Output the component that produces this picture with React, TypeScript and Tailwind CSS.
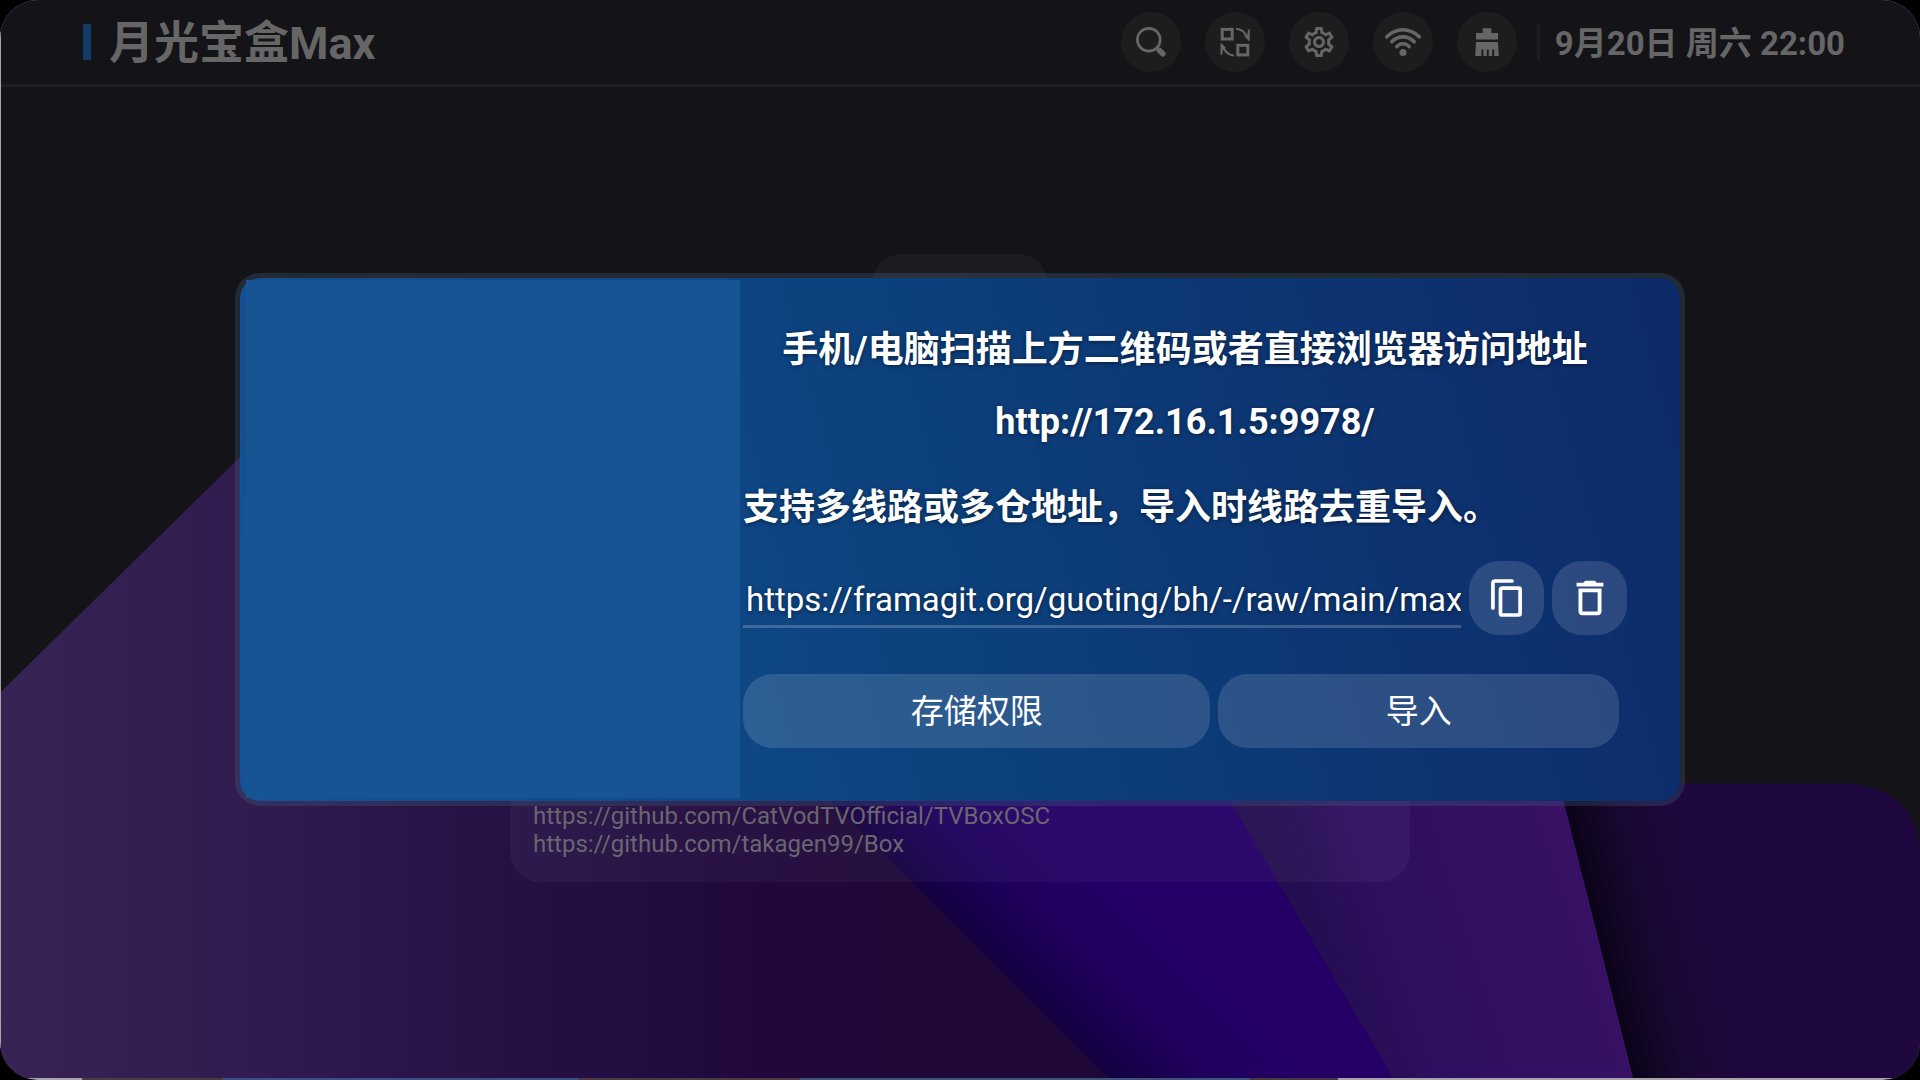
import { useState } from "react";
import type { ReactNode } from "react";
import { MdDeleteOutline, MdOutlineSettings } from "react-icons/md";

const FONT = "font-[Roboto,'Noto_Sans_CJK_SC',sans-serif]";

const SOURCES = [
  "https://github.com/CatVodTVOfficial/TVBoxOSC",
  "https://github.com/takagen99/Box",
];

function SearchIcon() {
  return (
    <svg viewBox="0 0 36 36" className="size-9" fill="none" stroke="currentColor" strokeLinecap="round">
      <circle cx="15.8" cy="15.7" r="11.4" strokeWidth="2.7" />
      <path d="M24 24l2 2" strokeWidth="3" />
      <path d="M26.4 26.4l3.4 3.4" strokeWidth="5.6" />
    </svg>
  );
}

function SwitchIcon() {
  return (
    <svg viewBox="0 0 36 36" className="size-9" fill="none" stroke="currentColor">
      <rect x="5.2" y="5.4" width="10" height="9.6" strokeWidth="3" />
      <rect x="20.8" y="21.3" width="10" height="9.6" strokeWidth="3" />
      <path d="M19 4.8C24 5 28 8 30.5 14" strokeWidth="2" />
      <path d="M17 31.4C12 31.2 8 28 5.5 22" strokeWidth="2" />
      <path d="M32.4 5.8L31.6 16.6 26.6 11.6 30 12.4 31 7z" fill="currentColor" stroke="none" />
      <path d="M31.8 5.5V16.8" strokeWidth="1.8" />
      <path d="M3.8 30.4L4.6 19.6 9.6 24.6 6.2 23.8 5.2 29z" fill="currentColor" stroke="none" />
      <path d="M4.4 30.7V19.4" strokeWidth="1.8" />
    </svg>
  );
}

function WifiIcon() {
  return (
    <svg viewBox="0 0 36 36" className="size-9" fill="none" stroke="currentColor" strokeWidth="3.6" strokeLinecap="round">
      <path d="M1.8 12.8C11 3.4 25 3.4 34.2 12.8" />
      <path d="M6.8 17.8C13 11.2 23 11.2 29.2 17.8" />
      <path d="M11.8 22.6C15.2 18.8 20.8 18.8 24.2 22.6" />
      <circle cx="18" cy="28.4" r="3.5" fill="currentColor" stroke="none" />
    </svg>
  );
}

function CleanIcon() {
  return (
    <svg viewBox="0 0 36 36" className="size-9" fill="currentColor">
      <path d="M13.7 4.3h8.6V9H29v6.5H7V9h6.7z" />
      <path d="M7 18h22l.8 14h-4.6v-6.5h-2V32h-3.4v-6.5h-2V32h-3.4v-6.5h-2V32H6.2z" />
    </svg>
  );
}

function CopyIcon() {
  return (
    <svg viewBox="0 0 31 38" className="h-[38px] w-[31px]" fill="none" stroke="currentColor" strokeWidth="3.7">
      <path d="M1.9 29V4.4q0-2.4 2.4-2.4H21" strokeLinecap="round" />
      <rect x="9.5" y="9.2" width="19.6" height="26.8" rx="1.4" />
    </svg>
  );
}

function Backdrop() {
  return (
    <svg
      viewBox="0 0 1920 1080"
      preserveAspectRatio="none"
      className="absolute inset-0 size-full"
      aria-hidden="true"
    >
      <defs>
        <linearGradient id="plum" gradientUnits="userSpaceOnUse" x1="0" y1="0" x2="900" y2="0">
          <stop offset="0" stopColor="#372354" />
          <stop offset="0.3" stopColor="#2f1b4f" />
          <stop offset="0.6" stopColor="#251044" />
          <stop offset="0.85" stopColor="#20083c" />
          <stop offset="1" stopColor="#1f0838" />
        </linearGradient>
        <linearGradient id="indigo" gradientUnits="userSpaceOnUse" x1="970" y1="940" x2="1070" y2="840">
          <stop offset="0" stopColor="#140040" />
          <stop offset="0.45" stopColor="#1e005c" />
          <stop offset="1" stopColor="#240066" />
        </linearGradient>
        <linearGradient id="violet" gradientUnits="userSpaceOnUse" x1="1310" y1="940" x2="1560" y2="860">
          <stop offset="0" stopColor="#240d50" />
          <stop offset="0.3" stopColor="#2e0f60" />
          <stop offset="1" stopColor="#361164" />
        </linearGradient>
        <linearGradient id="night" gradientUnits="userSpaceOnUse" x1="1598" y1="940" x2="1720" y2="910">
          <stop offset="0" stopColor="#0b0318" />
          <stop offset="0.45" stopColor="#1a0834" />
          <stop offset="1" stopColor="#1f0840" />
        </linearGradient>
      </defs>
      <path d="M1400 785H1848Q1920 791 1920 861V1080H1400z" fill="url(#night)" />
      <path d="M1100 600H1513L1633 1080H1300z" fill="url(#violet)" />
      <path d="M700 600H1112L1393 1080H900z" fill="url(#indigo)" />
      <path d="M0 694L240 458H486L1108 1080H0z" fill="url(#plum)" />
    </svg>
  );
}

function HeaderButton({ label, children }: { label: string; children: ReactNode }) {
  return (
    <button
      aria-label={label}
      className="flex size-[60px] items-center justify-center rounded-full bg-[#1d1d1e]"
    >
      {children}
    </button>
  );
}

function Header() {
  return (
    <header className="relative flex h-[87px] items-center justify-between border-b-3 border-[#1d1d22] pr-[75px] pl-[83px] text-[#666666]">
      <div className="flex items-center gap-[18px]">
        <span className="h-9 w-2 bg-[#113c68]" />
        <h1 className="pt-1 text-[45px] leading-[60px] font-bold">月光宝盒Max</h1>
      </div>
      <div className="flex items-center">
        <nav className="flex gap-6">
          <HeaderButton label="搜索">
            <SearchIcon />
          </HeaderButton>
          <HeaderButton label="切换">
            <SwitchIcon />
          </HeaderButton>
          <HeaderButton label="设置">
            <MdOutlineSettings className="size-9" />
          </HeaderButton>
          <HeaderButton label="网络">
            <WifiIcon />
          </HeaderButton>
          <HeaderButton label="清理">
            <CleanIcon />
          </HeaderButton>
        </nav>
        <span className="mr-[15px] ml-5 h-9 w-[3px] bg-[#1d1d1f]" />
        <time className="pt-1 text-[33px] leading-[60px] font-bold">9月20日 周六 22:00</time>
      </div>
    </header>
  );
}

function ImportDialog() {
  const [url, setUrl] = useState("https://framagit.org/guoting/bh/-/raw/main/max.json");

  return (
    <div
      role="dialog"
      aria-modal="true"
      aria-labelledby="import-title"
      className="box-content flex w-3/4 rounded-[25px] border-5 border-[#47607c]/30 bg-linear-75 from-[#145496] via-[#0c407c] via-50% to-[#0d2a68] bg-clip-padding text-white"
    >
      {/* QR code slot */}
      <div className="mt-0.5 mb-[3px] ml-1.5 h-[518px] w-[494px] shrink-0 bg-[#165494]" />

      <div className="flex min-w-0 flex-1 flex-col pt-12 pr-[53px] pl-[3px]">
        <div className="text-center text-4xl leading-[48px] font-bold text-shadow-[0_1px_4px_rgb(0_0_0/0.5)]">
          <h2 id="import-title">手机/电脑扫描上方二维码或者直接浏览器访问地址</h2>
          <p className="mt-6">http://172.16.1.5:9978/</p>
          <p className="mt-[38px] text-left">支持多线路或多仓地址，导入时线路去重导入。</p>
        </div>

        <div className="mt-[29px] flex gap-2">
          <input
            type="text"
            aria-label="线路地址"
            value={url}
            onChange={(e) => setUrl(e.target.value)}
            className="mt-[7px] h-[60px] min-w-0 flex-1 border-b-3 border-white/20 bg-transparent pt-1.5 pl-[3px] text-[33px] outline-none text-shadow-[0_1px_4px_rgb(0_0_0/0.5)]"
          />
          <button
            aria-label="复制"
            className="flex h-[74px] w-[75px] items-center justify-center rounded-[30px] bg-white/13"
          >
            <CopyIcon />
          </button>
          <button
            aria-label="删除"
            onClick={() => setUrl("")}
            className="flex h-[74px] w-[75px] items-center justify-center rounded-[30px] bg-white/13"
          >
            <MdDeleteOutline className="size-[46px]" />
          </button>
        </div>

        <div className="mt-[39px] flex gap-2 pr-2 text-[33px]">
          <button className="h-[74px] flex-[7] rounded-[30px] bg-white/13 pt-0.5">存储权限</button>
          <button className="h-[74px] flex-[6] rounded-[30px] bg-white/13 pt-0.5">导入</button>
        </div>
      </div>
    </div>
  );
}

export default function App() {
  return (
    <div lang="zh-CN" className={`min-h-screen bg-black ${FONT}`}>
      {/* The wallpaper shows through along the bottom edge */}
      <div className="relative flex min-h-screen overflow-hidden rounded-[38px] bg-[linear-gradient(90deg,#a8a3a8_0_82px,#4a3d42_82px_223px,#3b5080_223px_578px,#4a3a45_578px_800px,#3f5378_800px_1250px,#463a40_1250px_1338px,#a8a3a8_1338px)] pb-0.5">
        <div className="relative flex-1 bg-[#141418]">
          <Backdrop />
          <Header />

          <main className="relative flex flex-col items-center pt-[167px]">
            <div className="h-[60px] w-44 rounded-[30px] bg-white/4" />
            <section className="mt-7 flex h-[540px] w-[900px] flex-col justify-end rounded-[30px] bg-white/4 pb-6 pl-[23px] text-2xl leading-7 text-[#6b6570]">
              {SOURCES.map((source) => (
                <p key={source}>{source}</p>
              ))}
            </section>
          </main>
        </div>

        <span className="absolute inset-y-8 left-0 w-px bg-[#a8a3a8]" />

        <div className="absolute inset-0 flex items-center justify-center pb-px">
          <ImportDialog />
        </div>
      </div>
    </div>
  );
}
